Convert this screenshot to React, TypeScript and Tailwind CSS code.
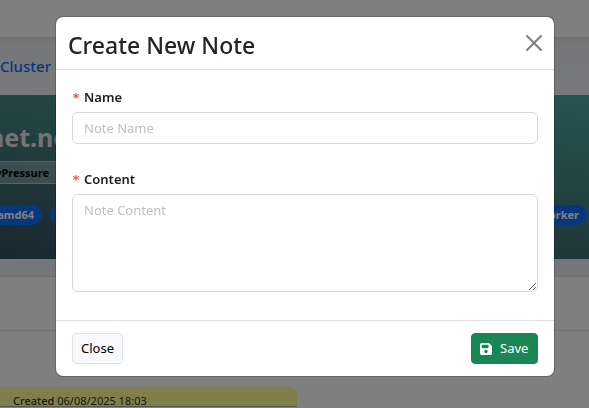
import React, { useState } from 'react';
import { FaFloppyDisk } from 'react-icons/fa6';

interface FieldLabelProps {
  htmlFor: string;
  children: React.ReactNode;
}

const FieldLabel: React.FC<FieldLabelProps> = ({ htmlFor, children }) => (
  <label htmlFor={htmlFor} className="flex items-center gap-1 h-[22px] mb-1 text-[13px] font-semibold text-[#1f1f1f]">
    <span className="w-2 h-4 leading-[18px] text-[13px] font-bold font-['DejaVu_Sans_Mono',monospace] text-[#ff4d4f]">*</span>
    {children}
  </label>
);

const NodePage: React.FC = () => (
  <div className="h-screen overflow-hidden bg-white" aria-hidden="true">
    <header className="relative h-[37px] bg-white shadow-[0_2px_4px_rgba(0,0,0,0.08)]" />
    <nav className="h-[58px] flex items-center bg-gradient-to-b from-[#ebedf1] to-[#f2f3f6] pt-0.5 text-[15px]">
      <a href="#cluster" className="font-medium text-[#0d6efd]">Cluster</a>
    </nav>

    <section className="h-[164px] overflow-hidden bg-[linear-gradient(188deg,#4aaba3_0%,#437d7d_50%,#344e5e_100%)]">
      <h1 className="h-[66px] pt-6 -ml-3 text-[25px] leading-9 font-bold text-[#e6e6e6] whitespace-nowrap">net.node</h1>
      <div className="h-[23px] w-1/2 flex items-center border-y border-[#b4c8c8] bg-white/30">
        <span className="w-[49px] flex justify-end text-[11px] font-bold text-black">yPressure</span>
      </div>
      <div className="flex justify-between mt-[21px] pr-[2px] text-[11px] font-bold text-white">
        <div className="flex gap-2">
          <span className="h-5 w-[42px] flex items-center justify-end pr-2 rounded-r-full bg-[#0d6efd]">amd64</span>
          <span className="h-5 w-20 rounded-full bg-[#0d6efd]" />
        </div>
        <span className="h-5 flex items-center px-2 rounded-full bg-[#0d6efd]">worker</span>
      </div>
    </section>

    <div className="h-[18px] bg-[#ebedf2] border-b border-[#dfe2e8]" />
    <div className="h-[54px] border-b border-[#e2e4e6]" />
    <div className="mt-14 w-[297px] h-5 overflow-hidden rounded-tr-md bg-[#ffff96] border-b border-[#b0b090] pl-[13px] pt-1 text-[11px] leading-5 text-[#333333]">
      <strong className="font-medium">Created</strong> 06/08/2025 18:03
    </div>
  </div>
);

export default function App() {
  const [name, setName] = useState('');
  const [content, setContent] = useState('');

  return (
    <div className="font-['Noto_Sans',sans-serif] text-sm text-[#212529]">
      <NodePage />

      <div className="fixed inset-0 bg-black/50 pt-4 pl-[55px] pr-[34px]">
        <form
          role="dialog"
          aria-labelledby="note-title"
          className="bg-white bg-clip-padding border border-black/20 rounded-lg overflow-hidden"
          onSubmit={(e) => e.preventDefault()}
        >
          <div className="flex items-center justify-between h-[53px] px-3 border-b border-[#dee2e6]">
            <h2 id="note-title" className="text-[23px] leading-9 pt-1 font-medium">Create New Note</h2>
            <button type="button" aria-label="Close dialog" className="text-[#7f7f7f]">
              <svg width="16" height="16" viewBox="0 0 16 16" fill="currentColor">
                <path d="M.293.293a1 1 0 0 1 1.414 0L8 6.586 14.293.293a1 1 0 1 1 1.414 1.414L9.414 8l6.293 6.293a1 1 0 0 1-1.414 1.414L8 9.414l-6.293 6.293a1 1 0 0 1-1.414-1.414L6.586 8 .293 1.707a1 1 0 0 1 0-1.414z" />
              </svg>
            </button>
          </div>

          <div className="px-4 pt-4 pb-7">
            <FieldLabel htmlFor="note-name">Name</FieldLabel>
            <input
              id="note-name"
              type="text"
              placeholder="Note Name"
              value={name}
              onChange={(e) => setName(e.target.value)}
              className="block w-full h-8 mb-6 px-[11px] border border-[#d9d9d9] rounded-md text-[13px] placeholder:text-[#bfbfbf]"
            />
            <FieldLabel htmlFor="note-content">Content</FieldLabel>
            <textarea
              id="note-content"
              placeholder="Note Content"
              value={content}
              onChange={(e) => setContent(e.target.value)}
              className="block w-full h-[98px] px-[11px] py-1 border border-[#d9d9d9] rounded-md text-[13px] leading-[22px] placeholder:text-[#bfbfbf]"
            />
          </div>

          <div className="flex items-center justify-between px-4 py-3 border-t border-[#dee2e6]">
            <button type="button" className="h-[31px] px-2 bg-[#f8f9fa] border border-[#dee2e6] rounded text-[13px] text-black">
              Close
            </button>
            <button type="submit" className="h-[31px] min-w-[67px] px-2 flex items-center gap-2 bg-[#198754] border border-[#198754] rounded text-[13px] text-white">
              <FaFloppyDisk className="w-3 h-[14px]" />
              Save
            </button>
          </div>
        </form>
      </div>
    </div>
  );
}
